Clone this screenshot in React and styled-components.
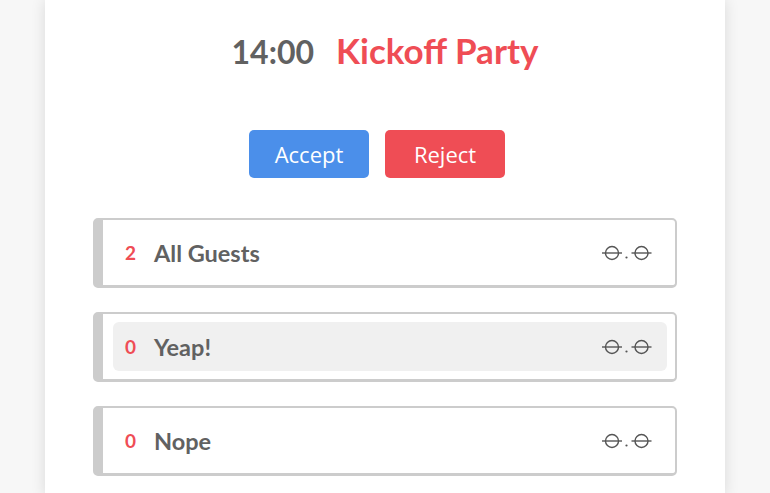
import React from 'react';
import styled, { createGlobalStyle } from 'styled-components';

const GlobalStyle = createGlobalStyle`
  html, body {
    margin: 0;
    padding: 0;
    background: #f7f7f7;
    font-family: Lato, "Open Sans", sans-serif;
  }
`;

const Card = styled.div`
  width: 680px;
  min-height: 493px;
  margin: 0 auto;
  background: #fff;
  box-shadow: 0 0 14px rgba(0, 0, 0, 0.12);
  padding: 27px 48px 20px;
  box-sizing: border-box;
  display: flex;
  flex-direction: column;
`;

const Title = styled.h1`
  margin: 0;
  display: flex;
  justify-content: center;
  align-items: baseline;
  gap: 22px;
  font-weight: 700;
  line-height: 46px;
`;

const Time = styled.span`
  color: #616161;
  font-size: 32px;
`;

const EventName = styled.span`
  color: #ef4d55;
  font-size: 35px;
`;

const Actions = styled.div`
  display: flex;
  justify-content: center;
  gap: 16px;
  padding-right: 16px;
  margin-top: 55px;
`;

const Button = styled.button`
  width: 120px;
  height: 48px;
  border: none;
  border-radius: 5px;
  background: ${p => (p.danger ? '#ef4d55' : '#4b8fea')};
  color: #fff;
  font-family: "Open Sans", sans-serif;
  font-size: 22px;
  cursor: pointer;
`;

const List = styled.div`
  display: flex;
  flex-direction: column;
  gap: 24px;
  margin-top: 40px;
`;

const Row = styled.div`
  border: 2px solid #cccccc;
  border-left-width: 10px;
  border-bottom-width: 3px;
  border-radius: 5px;
  padding: 8px 8px 8px 10px;
`;

const Item = styled.div`
  height: 49px;
  display: flex;
  align-items: center;
  padding: 0 15px 0 12px;
  border-radius: 6px;
  background: ${p => (p.active ? '#f0f0f0' : 'transparent')};
`;

const Count = styled.span`
  width: 16px;
  color: #ef4d55;
  font-size: 19px;
  font-weight: 700;
`;

const Label = styled.span`
  flex: 1;
  margin-left: 13px;
  color: #616161;
  font-size: 23.5px;
  font-weight: 700;
`;

const Face = () => (
  <svg width="50" height="16" viewBox="0 0 50 16" fill="none" stroke="#555" strokeWidth="1.4">
    <circle cx="10" cy="8" r="6.5" />
    <line x1="0" y1="8" x2="20" y2="8" />
    <circle cx="24.5" cy="12.5" r="1.1" fill="#555" stroke="none" />
    <circle cx="39.5" cy="8" r="6.5" />
    <line x1="29.5" y1="8" x2="49.5" y2="8" />
  </svg>
);

const groups = [
  { count: 2, label: 'All Guests' },
  { count: 0, label: 'Yeap!', active: true },
  { count: 0, label: 'Nope' },
];

export default function App() {
  return (
    <>
      <GlobalStyle />
      <Card>
        <Title>
          <Time>14:00</Time>
          <EventName>Kickoff Party</EventName>
        </Title>
        <Actions>
          <Button>Accept</Button>
          <Button danger>Reject</Button>
        </Actions>
        <List>
          {groups.map(g => (
            <Row key={g.label}>
              <Item active={g.active}>
                <Count>{g.count}</Count>
                <Label>{g.label}</Label>
                <Face />
              </Item>
            </Row>
          ))}
        </List>
      </Card>
    </>
  );
}
